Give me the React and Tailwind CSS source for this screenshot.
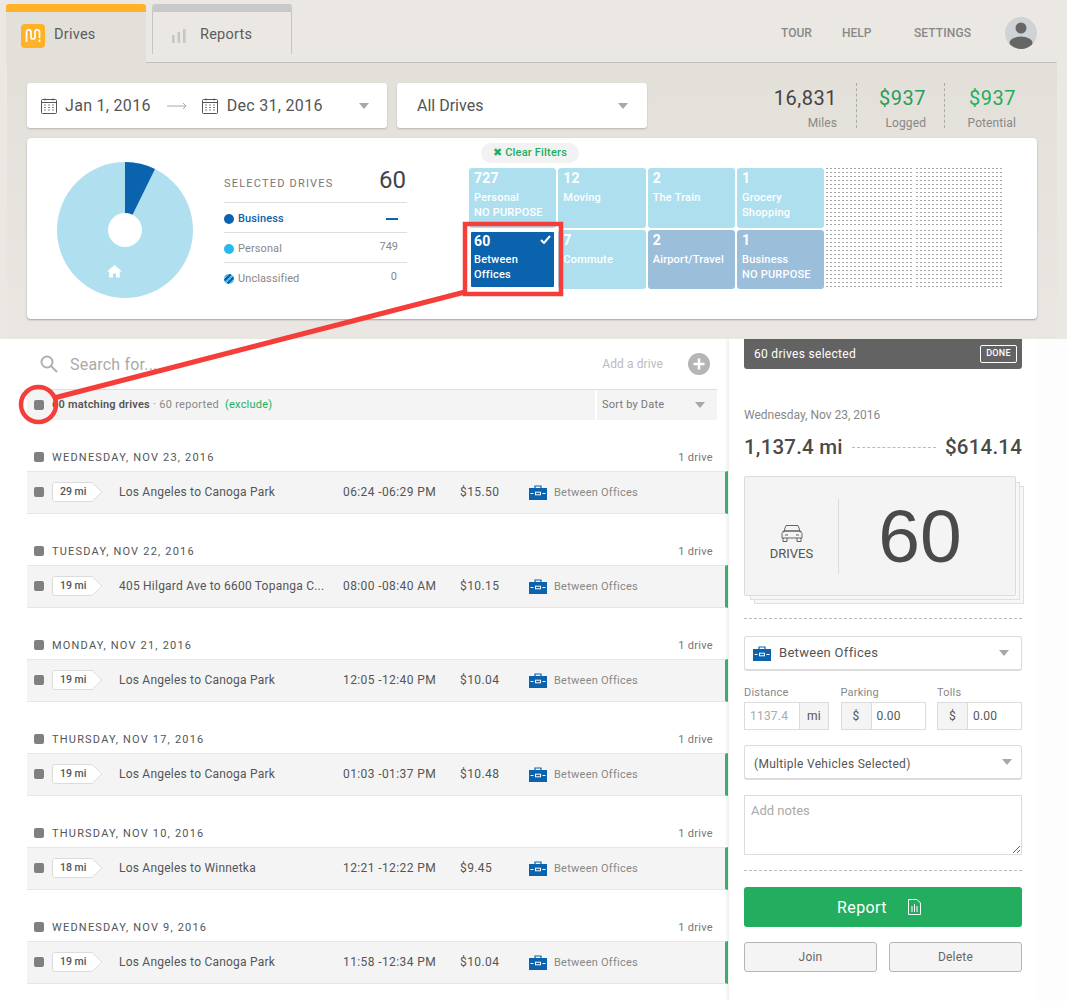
import React from "react";

const Caret = ({ className = "" }) => (
  <svg width="10" height="6" viewBox="0 0 10 6" className={className}><path d="M0 0h10L5 6z" fill="#a8a8a8" /></svg>
);
const Check = () => <span className="block w-[10px] h-[10px] rounded-[2px] bg-[#808080] shrink-0" />;
const Calendar = () => (
  <svg width="16" height="16" viewBox="0 0 16 16" fill="none" stroke="#555" strokeWidth="1">
    <rect x=".5" y="1.5" width="15" height="14" rx="1" />
    <path d="M.5 4.5h15M4 .5v2M12 .5v2" />
    <path d="M3 7h2M7 7h2M11 7h2M3 9.5h2M7 9.5h2M11 9.5h2M3 12h2M7 12h2M11 12h2" strokeWidth=".9" stroke="#777" />
  </svg>
);
const Briefcase = () => (
  <svg width="18" height="15" viewBox="0 0 18 15" className="shrink-0">
    <path d="M6 3V1h6v2" fill="none" stroke="#0b62ad" strokeWidth="1.2" />
    <rect x="0" y="3" width="18" height="12" fill="#0b62ad" />
    <path d="M1.5 8.5h3M13.5 8.5h3" stroke="#fff" strokeWidth="1" />
    <rect x="6.5" y="7.2" width="5" height="2.6" fill="none" stroke="#fff" strokeWidth="1" />
  </svg>
);
const Tile = ({ n, a, b, tone = "light" }) => (
  <div className={`rounded-[3px] pl-[5px] pt-[2px] text-white tracking-[0.2px] ${tone === "light" ? "bg-[#aedfef]" : "bg-[#9bbedb]"}`}>
    <div className="text-[14px] leading-[17px] font-bold">{n}</div>
    <div className="text-[11px] leading-[15px] mt-[3px] font-medium whitespace-nowrap">{a}</div>
    {b && <div className="text-[11px] leading-[15px] font-medium whitespace-nowrap">{b}</div>}
  </div>
);
const Dots = () => (
  <div className="bg-[linear-gradient(to_right,transparent_2px,#fff_2px),linear-gradient(to_bottom,#a8a8a8_1px,#fff_1px)] bg-[length:4px_4px]" />
);

const drives = [
  ["WEDNESDAY, NOV 23, 2016", "29 mi", "Los Angeles to Canoga Park", "06:24 -06:29 PM", "$15.50"],
  ["TUESDAY, NOV 22, 2016", "19 mi", "405 Hilgard Ave to 6600 Topanga C...", "08:00 -08:40 AM", "$10.15"],
  ["MONDAY, NOV 21, 2016", "19 mi", "Los Angeles to Canoga Park", "12:05 -12:40 PM", "$10.04"],
  ["THURSDAY, NOV 17, 2016", "19 mi", "Los Angeles to Canoga Park", "01:03 -01:37 PM", "$10.48"],
  ["THURSDAY, NOV 10, 2016", "18 mi", "Los Angeles to Winnetka", "12:21 -12:22 PM", "$9.45"],
  ["WEDNESDAY, NOV 9, 2016", "19 mi", "Los Angeles to Canoga Park", "11:58 -12:34 PM", "$10.04"],
];

const Group = ({ d }) => (
  <div className="mb-[23px]">
    <div className="h-[28px] flex items-center pl-[7px] pr-[16px] w-[702px]">
      <Check />
      <span className="ml-[8px] pt-[2px] text-[11px] tracking-[1.2px] text-[#555]">{d[0]}</span>
      <span className="ml-auto pt-[2px] text-[11px] tracking-[0.3px] text-[#777]">1 drive</span>
    </div>
    <div className="h-[43px] w-[701px] bg-[#f4f4f4] border-y border-[#e6e6e6] border-r-[3px] border-r-[#3fb170] flex items-center pl-[7px] pb-[1px] text-[12px] text-[#555]">
      <Check />
      <div className="ml-[8px] w-[51px] h-[20px] relative shrink-0">
        <svg width="51" height="20" viewBox="0 0 51 20" className="absolute inset-0">
          <path d="M3 .5H40L50 10 40 19.5H3A2.5 2.5 0 0 1 .5 17V3A2.5 2.5 0 0 1 3 .5z" fill="#fff" stroke="#dcdcdc" />
        </svg>
        <span className="absolute left-[8px] top-0 leading-[20px] text-[10.5px] font-medium text-[#555]">{d[1]}</span>
      </div>
      <div className="ml-[16px] w-[224px] whitespace-nowrap tracking-[0.22px]">{d[2]}</div>
      <div className="w-[117px] whitespace-nowrap tracking-[0.4px]">{d[3]}</div>
      <div className="w-[69px] tracking-[0.4px]">{d[4]}</div>
      <Briefcase />
      <span className="ml-[7px] pt-[2px] text-[11px] tracking-[0.25px] text-[#888]">Between Offices</span>
    </div>
  </div>
);

const Stat = ({ v, l, c }) => (
  <div className="h-[45px] flex flex-col items-end">
    <div className={`text-[20px] leading-[28px] mt-[1px] tracking-[0.5px] ${c}`}>{v}</div>
    <div className="text-[12px] leading-[16px] mt-[3px] tracking-[0.1px] text-[#888]">{l}</div>
  </div>
);

const Legend = ({ dot, label, value, labelCls = "text-[#888] text-[11px]" }) => (
  <div className="h-[30px] border-t border-[#dedede] flex items-center pt-[3px]">
    {dot}
    <span className={`ml-[4px] tracking-[0.1px] ${labelCls}`}>{label}</span>
    <span className="ml-auto mr-[9px] text-[11px] text-[#888] -mt-[4px]">{value}</span>
  </div>
);

export default function App() {
  return (
    <div className="relative w-[1067px] h-[1001px] overflow-hidden bg-white font-['Roboto',sans-serif]">
      {/* Top */}
      <div className="h-[339px] bg-[#ebe8e3] relative z-10">
        <div className="h-[62px] flex items-start pl-[6px] pt-[4px]">
          <div className="w-[140px] h-[59px] rounded-t-[3px] bg-[#e3e0da] border-t-[8px] border-[#ffb128] flex items-start pl-[15px] pt-[12px] relative z-10">
            <svg width="24" height="24" viewBox="0 0 24 24">
              <rect width="24" height="24" rx="4" fill="#ffb128" />
              <path d="M5.500 18V8.200a2.250 2.250 0 0 1 4.500 0V13a2 2 0 0 0 4 0V8.200a2.250 2.250 0 0 1 4.500 0V14M18.500 15.500v2.500" fill="none" stroke="#fff" strokeWidth="1.700" />
            </svg>
            <span className="ml-[9px] mt-[1px] text-[14.5px] leading-[20px] text-[#5c5c5c] tracking-[0.25px]">Drives</span>
          </div>
          <div className="ml-[6px] w-[140px] h-[50px] rounded-t-[3px] bg-[#ebe8e3] border-t-[8px] border-x border-x-[#c4c4c2] border-t-[#c9c9c9] flex items-start pl-[19px] pt-[12px]">
            <svg width="14" height="14" viewBox="0 0 14 14" fill="#c6c6c6" className="mt-[5px]"><rect x="0" y="6" width="2.600" height="8" /><rect x="5.500" y="3" width="2.600" height="11" /><rect x="11" y="0" width="2.600" height="14" /></svg>
            <span className="ml-[14px] mt-[1px] text-[14.5px] leading-[20px] text-[#5c5c5c] tracking-[0.25px]">Reports</span>
          </div>
          <div className="ml-auto flex items-center h-[58px] pr-[30px] text-[12px] font-medium text-[#888]">
            <span className="w-[61px] -mt-[1px]">TOUR</span>
            <span className="w-[72px] -mt-[1px]">HELP</span>
            <span className="w-[91px] -mt-[1px] tracking-[0.1px]">SETTINGS</span>
            <svg width="32" height="32" viewBox="0 0 32 32">
              <defs><clipPath id="av"><circle cx="16" cy="16" r="16" /></clipPath></defs>
              <circle cx="16" cy="16" r="16" fill="#d0d3d6" />
              <g clipPath="url(#av)" fill="#666"><circle cx="16" cy="11" r="5.500" /><ellipse cx="16" cy="26" rx="11.500" ry="6.500" /></g>
            </svg>
          </div>
        </div>
        <div className="absolute left-[7px] top-[62px] right-[10px] h-[277px] bg-gradient-to-b from-[#e3e0da] to-[#eae7e2] rounded-tr-[4px]">
          <div className="border-t border-[#c0c0bd] absolute left-[139px] right-0 top-0 rounded-tr-[4px]" />
          <div className="flex pl-[20px] pt-[21px] pr-[41px]">
            <div className="w-[360px] h-[45px] bg-white rounded-[3px] shadow-[0_1px_2px_rgba(0,0,0,.2)] flex items-center pl-[14px] text-[16px] text-[#555]">
              <Calendar />
              <span className="ml-[8px] tracking-[0.3px]">Jan 1, 2016</span>
              <svg width="20" height="8" viewBox="0 0 20 8" className="ml-[16px]" fill="none" stroke="#aaa"><path d="M0 4h19M16 1l3 3-3 3" /></svg>
              <span className="ml-[15px]"><Calendar /></span>
              <span className="ml-[9px] tracking-[0.3px]">Dec 31, 2016</span>
              <Caret className="ml-[36px]" />
            </div>
            <div className="ml-[10px] w-[250px] h-[45px] bg-white rounded-[3px] shadow-[0_1px_2px_rgba(0,0,0,.2)] flex items-center pl-[20px] text-[16px] text-[#555]">
              All Drives
              <Caret className="ml-auto mr-[19px]" />
            </div>
            <div className="ml-auto flex">
              <div className="pr-[19px] border-r border-dashed border-[#aaa]"><Stat v="16,831" l="Miles" c="text-[#444]" /></div>
              <div className="w-[88px] pr-[18px] border-r border-dashed border-[#aaa] flex justify-end"><Stat v="$937" l="Logged" c="text-[#2a9d5c]" /></div>
              <div className="w-[71px] flex justify-end"><Stat v="$937" l="Potential" c="text-[#22ae5e]" /></div>
            </div>
          </div>
          <div className="absolute left-[20px] top-[76px] w-[1010px] h-[181px] bg-white rounded-[4px] shadow-[0_1px_2px_rgba(0,0,0,.3)] flex pl-[30px]">
            <svg width="136" height="136" viewBox="0 0 136 136" className="mt-[24px] shrink-0">
              <circle cx="68" cy="68" r="68" fill="#b0e0f0" />
              <path d="M68 0A68 68 0 0 1 98 7L68 68z" fill="#0b62ad" />
              <circle cx="68" cy="68" r="17" fill="#fff" />
              <path d="M57.500 103l-7.500 6.500h2.200v6h3.700v-4h3.200v4h3.700v-6h2.200z" fill="#fff" />
            </svg>
            <div className="ml-[31px] w-[183px] pt-[26px] shrink-0">
              <div className="h-[38px] flex items-center">
                <span className="text-[11px] pt-[2px] tracking-[1.2px] text-[#777]">SELECTED DRIVES</span>
                <span className="ml-auto mr-[1px] -mt-[6px] text-[24px] text-[#444]">60</span>
              </div>
              <Legend dot={<span className="w-[10px] h-[10px] rounded-full bg-[#0b62ad]" />} label="Business" labelCls="text-[#0b62ad] font-medium text-[11px]" value={<span className="block w-[12px] h-[2px] bg-[#0b62ad] mt-[4px]" />} />
              <Legend dot={<span className="w-[10px] h-[10px] rounded-full bg-[#29b9ee]" />} label="Personal" value="749" />
              <Legend dot={<span className="w-[10px] h-[10px] rounded-full bg-[repeating-linear-gradient(-45deg,#0b62ad_0_2px,#55b9e6_2px_4px)]" />} label="Unclassified" value={<span className="mr-[1px]">0</span>} />
            </div>
            <div className="ml-[62px] w-[534px] shrink-0 pt-[5px]">
              <div className="ml-[12px] w-[98px] h-[20px] rounded-full bg-[#f2f2f2] flex items-center justify-center text-[11px] tracking-[0.2px] font-medium text-[#22ae5e]">
                <span className="mr-[3px] text-[11px]">✖</span>Clear Filters
              </div>
              <div className="mt-[5px] grid grid-cols-6 grid-rows-[60px_59px] gap-x-[2px] gap-y-[2px]">
                <Tile n="727" a="Personal" b="NO PURPOSE" />
                <Tile n="12" a="Moving" />
                <Tile n="2" a="The Train" />
                <Tile n="1" a="Grocery" b="Shopping" />
                <Dots /><Dots />
                <div className="rounded-[3px] bg-[#0b62ad] border-2 border-white pl-[3px] pt-[1px] text-white relative tracking-[0.2px]">
                  <div className="text-[14px] leading-[17px] font-bold">60</div>
                  <div className="text-[11px] leading-[15px] mt-[2px] font-medium">Between</div>
                  <div className="text-[11px] leading-[15px] font-medium">Offices</div>
                  <svg width="11" height="9" viewBox="0 0 11 9" className="absolute right-[3px] top-[3px]"><path d="M1 5l3 3 6-7" fill="none" stroke="#fff" strokeWidth="2" /></svg>
                </div>
                <Tile n="7" a="Commute" />
                <Tile n="2" a="Airport/Travel" tone="dark" />
                <Tile n="1" a="Business" b="NO PURPOSE" tone="dark" />
                <Dots /><Dots />
              </div>
            </div>
          </div>
        </div>
      </div>

      {/* Bottom */}
      <div className="flex h-[662px] bg-[#fdfdfd]">
        <div className="w-[729px] bg-white shrink-0 pl-[27px]">
          <div className="h-[51px] w-[690px] flex items-center pl-[13px] pr-[7px] border-b border-[#dedede]">
            <svg width="18" height="18" viewBox="0 0 18 18" fill="none" stroke="#b0b0b0" strokeWidth="2"><circle cx="7" cy="7" r="5.500" /><path d="M11 11l6 6" /></svg>
            <span className="ml-[12px] pt-[1px] text-[16px] text-[#aaa] tracking-[0.2px]">Search for...</span>
            <span className="ml-auto text-[12px] text-[#bbb] tracking-[0.1px]">Add a drive</span>
            <svg width="22" height="22" viewBox="0 0 22 22" className="ml-[25px]"><circle cx="11" cy="11" r="11" fill="#b5b5b5" /><path d="M11 5.500v11M5.500 11h11" stroke="#fff" strokeWidth="2.500" /></svg>
          </div>
          <div className="flex h-[30px] w-[690px] text-[11px] tracking-[0.2px]">
            <div className="w-[568px] bg-[#f4f4f4] flex items-center pl-[7px]">
              <Check />
              <span className="ml-[8px] font-semibold text-[#555]">60 matching drives</span>
              <span className="ml-[3px] tracking-[0.3px] text-[#888]">· 60 reported</span>
              <span className="ml-[6px] tracking-[0.2px] text-[#22ae5e]">(exclude)</span>
            </div>
            <div className="ml-[2px] w-[120px] bg-[#f4f4f4] flex items-center pl-[5px] text-[#777]">
              Sort by Date
              <Caret className="ml-auto mr-[12px]" />
            </div>
          </div>
          <div className="pt-[23px]">
            {drives.map((d, i) => <Group key={i} d={d} />)}
          </div>
        </div>
        <div className="w-[308px] h-full bg-white shadow-[-2px_0_3px_rgba(0,0,0,.07)] shrink-0 px-[15px]">
          <div className="h-[30px] rounded-b-[3px] bg-[#636363] flex items-center pl-[10px] pr-[5px] text-[12px] text-white tracking-[0.3px]">
            60 drives selected
            <span className="ml-auto w-[37px] h-[18px] border border-white rounded-[2px] text-[9px] font-medium flex items-center justify-center">DONE</span>
          </div>
          <div className="mt-[38px] text-[12px] leading-[16px] text-[#888]">Wednesday, Nov 23, 2016</div>
          <div className="mt-[11px] flex items-center h-[26px] text-[20.5px] tracking-[0.2px] font-medium text-[#4a4a4a]">
            <span>1,137.4 mi</span>
            <span className="flex-1 mx-[9px] border-t border-dashed border-[#bbb]" />
            <span>$614.14</span>
          </div>
          <div className="relative mt-[16px] w-[272px] h-[120px]">
            <div className="absolute left-[10px] top-[10px] w-[270px] h-[118px] bg-[#f7f7f7] border border-[#e0e0e0]" />
            <div className="absolute left-[6px] top-[6px] w-[270px] h-[118px] bg-[#f7f7f7] border border-[#e0e0e0]" />
            <div className="relative h-full bg-[#f4f4f4] border border-[#dcdcdc] rounded-[2px] flex items-center">
              <div className="w-[93px] pt-[12px] flex flex-col items-center">
                <svg width="22" height="20" viewBox="0 0 22 20" fill="none" stroke="#555" strokeWidth=".9" className="mb-[3px]">
                  <path d="M5 2.500h12l2 5.500H3zM3 8h16l2 2.500v4.500H1v-4.500zM2 15v3.500h4V15M16 15v3.500h4V15M1.500 8.500h2M18.500 8.500h2M4 12h3M15 12h3" />
                </svg>
                <span className="text-[13px] leading-[16px] text-[#555]">DRIVES</span>
              </div>
              <div className="h-[75px] border-l border-[#dcdcdc]" />
              <div className="flex-1 text-center font-['Liberation_Sans',sans-serif] text-[75px] leading-none text-[#4a4a4a] -ml-[14px]">60</div>
            </div>
          </div>
          <div className="mt-[22px] border-t border-dashed border-[#bbb]" />
          <div className="mt-[17px] h-[35px] bg-white border border-[#dcdcdc] border-b-[2px] rounded-[3px] flex items-center pl-[8px] pr-[12px] text-[13px] tracking-[0.3px] text-[#555]">
            <Briefcase />
            <span className="ml-[8px]">Between Offices</span>
            <Caret className="ml-auto" />
          </div>
          <div className="mt-[15px] flex justify-between text-[11px] tracking-[0.2px] text-[#888]">
            <div className="w-[85px]">
              <div className="leading-[13px] mb-[3px]">Distance</div>
              <div className="flex h-[28px] border border-[#dcdcdc]">
                <span className="w-[54px] pl-[5px] text-[12px] leading-[26px] text-[#aaa]">1137.4</span>
                <span className="flex-1 bg-[#f4f4f4] border-l border-[#dcdcdc] text-center text-[12px] leading-[26px] text-[#555]">mi</span>
              </div>
            </div>
            <div className="w-[85px]">
              <div className="leading-[13px] mb-[3px]">Parking</div>
              <div className="flex h-[28px] border border-[#dcdcdc]">
                <span className="w-[30px] bg-[#f4f4f4] border-r border-[#dcdcdc] text-center text-[12px] leading-[26px] text-[#555]">$</span>
                <span className="pl-[5px] text-[12px] leading-[26px] text-[#555]">0.00</span>
              </div>
            </div>
            <div className="w-[85px]">
              <div className="leading-[13px] mb-[3px]">Tolls</div>
              <div className="flex h-[28px] border border-[#dcdcdc]">
                <span className="w-[30px] bg-[#f4f4f4] border-r border-[#dcdcdc] text-center text-[12px] leading-[26px] text-[#555]">$</span>
                <span className="pl-[5px] text-[12px] leading-[26px] text-[#555]">0.00</span>
              </div>
            </div>
          </div>
          <div className="mt-[15px] h-[35px] bg-white border border-[#dcdcdc] border-b-[2px] rounded-[3px] flex items-center pl-[9px] pr-[9px] text-[12px] tracking-[0.3px] text-[#555]">
            <span className="pt-[3px]">(Multiple Vehicles Selected)</span>
            <Caret className="ml-auto" />
          </div>
          <textarea placeholder="Add notes" className="block mt-[15px] w-[278px] h-[60px] border border-[#dcdcdc] px-[6px] pt-[7px] text-[13px] leading-[16px] placeholder:text-[#aaa] outline-none" />
          <div className="mt-[15px] border-t border-dashed border-[#bbb]" />
          <div className="mt-[16px] h-[40px] pr-[8px] rounded-[3px] bg-[#22ae5e] flex items-center justify-center text-[16px] text-white tracking-[0.4px]">
            <span className="pt-[1px]">Report</span>
            <svg width="13" height="16" viewBox="0 0 13 16" fill="none" stroke="#fff" className="ml-[21px]"><path d="M.5.5H9L12.500 4v11.500H.5zM4 7v6M6.500 5v8M9 7v6" /></svg>
          </div>
          <div className="mt-[15px] flex justify-between text-[12px] tracking-[0.2px] text-[#666]">
            <div className="w-[133px] h-[30px] bg-[#f4f4f4] border border-[#b5b5b5] rounded-[3px] flex items-center justify-center">Join</div>
            <div className="w-[133px] h-[30px] bg-[#f4f4f4] border border-[#b5b5b5] rounded-[3px] flex items-center justify-center">Delete</div>
          </div>
        </div>
      </div>

      {/* Annotation */}
      <svg width="1067" height="1001" viewBox="0 0 1067 1001" className="absolute inset-0 z-20 pointer-events-none" fill="none" stroke="#f53e3a">
        <rect x="465" y="224" width="96" height="70" strokeWidth="4.500" />
        <path d="M54 398L465 292" strokeWidth="5" />
        <circle cx="38.500" cy="404.500" r="17.500" strokeWidth="4.500" />
      </svg>
    </div>
  );
}
